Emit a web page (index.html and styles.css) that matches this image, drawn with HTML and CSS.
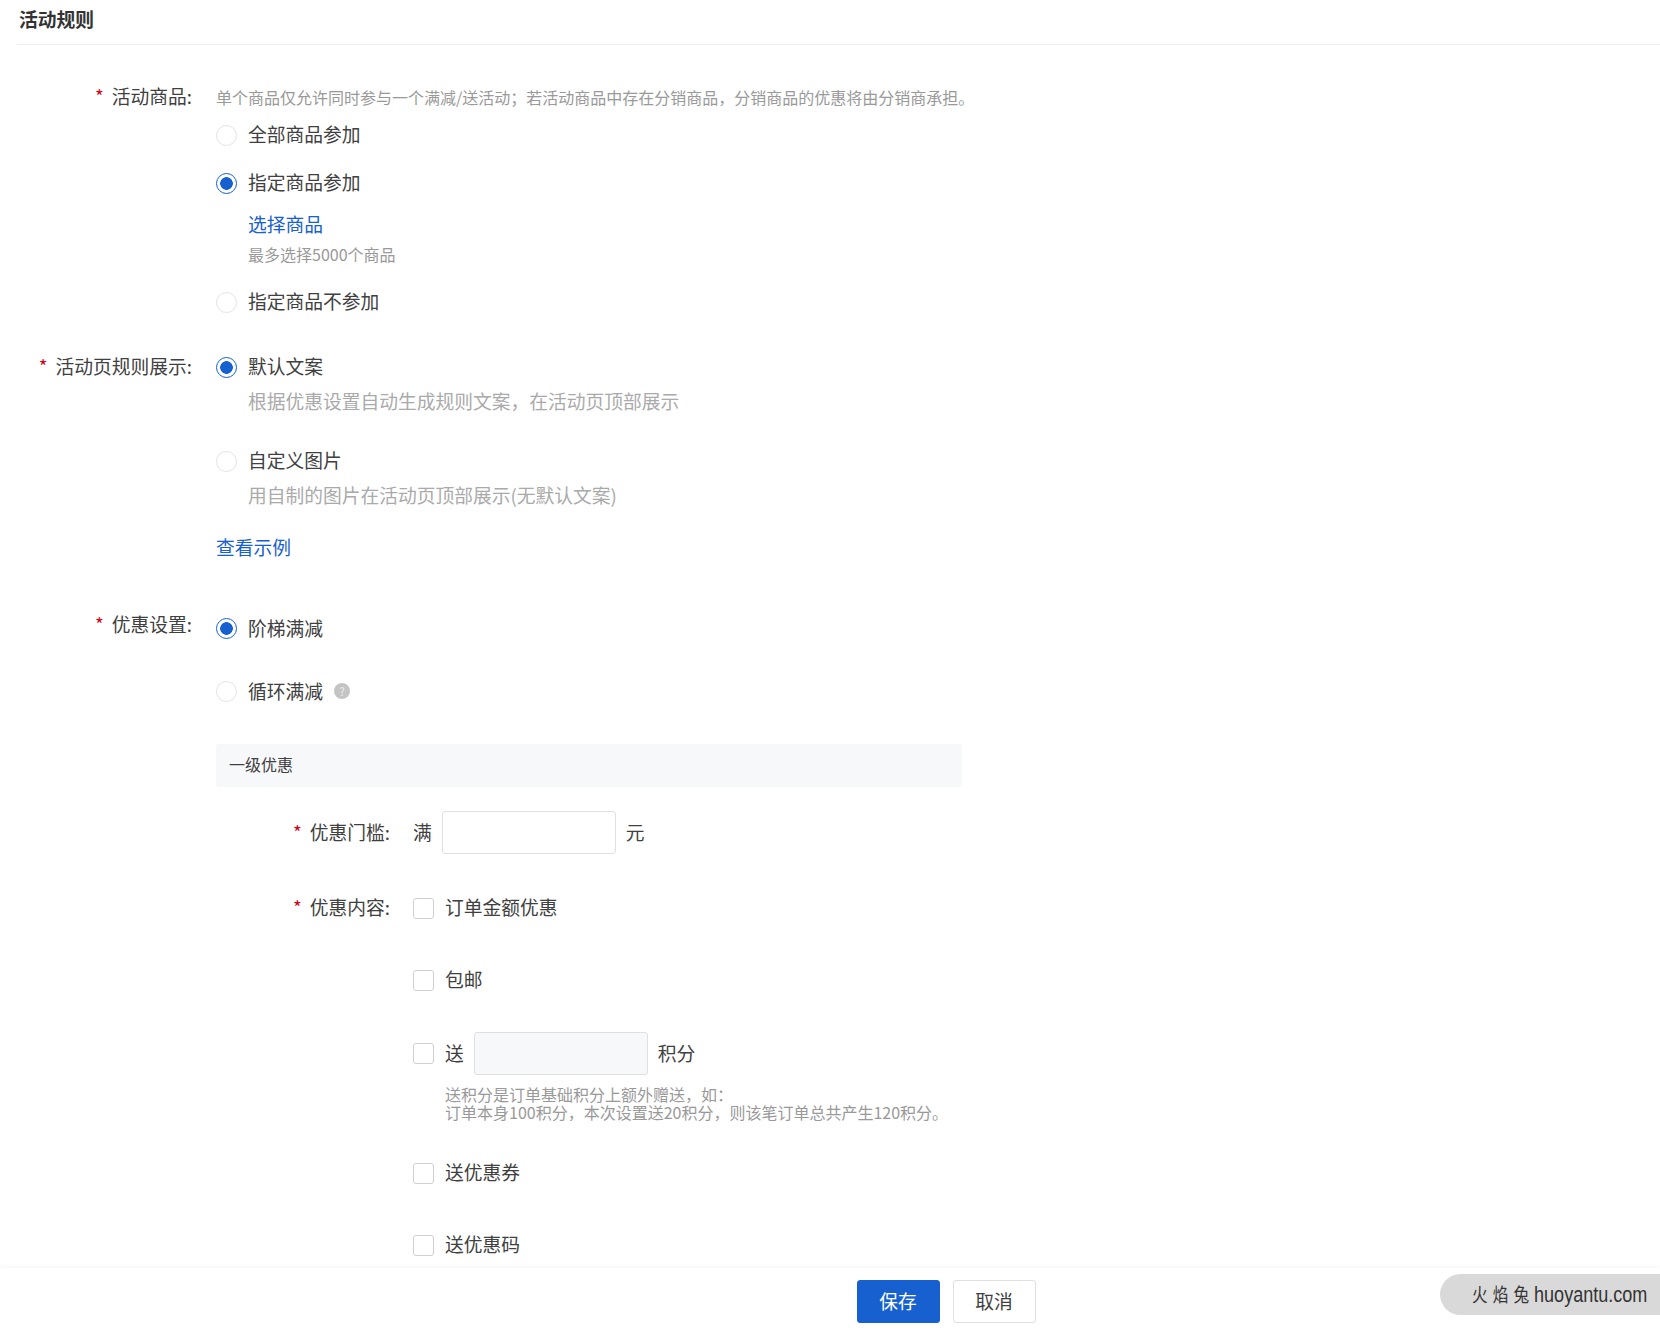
FILE: index.html
```html
<!DOCTYPE html>
<html lang="zh-CN">
<head>
	<meta charset="utf-8">
	<meta name="viewport" content="width=device-width, initial-scale=1">
	<title>活动规则</title>

	<link rel="stylesheet" href="styles.css">
</head>
<body>

	<div class="page">
		<form class="main">
			<h2 class="title">活动规则</h2>

			<div class="form-group first-group">
				<div class="label label-first"><i>*</i>活动商品:</div>
				<div class="control">
					<p class="hint line">单个商品仅允许同时参与一个满减/送活动&#65307;若活动商品中存在分销商品&#65292;分销商品的优惠将由分销商承担。</p>
					<label class="choice mt13"><input type="radio" name="goods">全部商品参加</label>
					<label class="choice mt24"><input type="radio" name="goods" checked>指定商品参加</label>
					<div class="indent">
						<a class="link line mt17">选择商品</a>
						<p class="hint line mt7">最多选择5000个商品</p>
					</div>
					<label class="choice mt23"><input type="radio" name="goods">指定商品不参加</label>
				</div>
			</div>

			<div class="form-group mt41">
				<div class="label"><i>*</i>活动页规则展示:</div>
				<div class="control">
					<label class="choice"><input type="radio" name="rule" checked>默认文案</label>
					<p class="desc line indent mt10">根据优惠设置自动生成规则文案&#65292;在活动页顶部展示</p>
					<label class="choice mt36"><input type="radio" name="rule">自定义图片</label>
					<p class="desc line indent mt10">用自制的图片在活动页顶部展示(无默认文案)</p>
					<a class="link line mt28">查看示例</a>
				</div>
			</div>

			<div class="form-group mt57">
				<div class="label label-up"><i>*</i>优惠设置:</div>
				<div class="control">
					<label class="choice choice-low"><input type="radio" name="type" checked>阶梯满减</label>
					<label class="choice choice-low mt39"><input type="radio" name="type">循环满减<span class="help">?</span></label>

					<div class="level-head">一级优惠</div>

					<div class="sub-group threshold">
						<div class="label sub-label"><i>*</i>优惠门槛:</div>
						<div class="inline">
							<span>满</span>
							<input type="text" class="num">
							<span>元</span>
						</div>
					</div>

					<div class="sub-group mt42">
						<div class="label sub-label"><i>*</i>优惠内容:</div>
						<div class="control">
							<label class="choice"><input type="checkbox">订单金额优惠</label>
							<label class="choice mt48"><input type="checkbox">包邮</label>
							<div class="inline mt40">
								<label class="choice"><input type="checkbox">送</label>
								<input type="text" class="num" disabled>
								<span>积分</span>
							</div>
							<p class="hint points">送积分是订单基础积分上额外赠送&#65292;如&#65306;<br>订单本身100积分&#65292;本次设置送20积分&#65292;则该笔订单总共产生120积分。</p>
							<label class="choice mt40"><input type="checkbox">送优惠券</label>
							<label class="choice mt48"><input type="checkbox">送优惠码</label>
						</div>
					</div>
				</div>
			</div>
		</form>

		<div class="footer">
			<button type="submit" class="btn btn-primary">保存</button>
			<button type="reset" class="btn">取消</button>
		</div>

		<div class="watermark"><span class="wm-text"><span class="wm-cn">火 焰 兔</span> huoyantu.com</span></div>
	</div>

</body>
</html>
```

FILE: styles.css
```css
*{
	margin: 0;
	padding: 0;
	box-sizing: border-box;
}
body{
	background: #fff;
	color: #404040;
	font-family: "Noto Sans CJK SC", "Liberation Sans", sans-serif;
	font-size: 18.75px;
}
.page{
	position: relative;
	display: flex;
	flex-direction: column;
	height: 1330px;
	overflow: hidden;
}
.main{
	flex: 1;
	overflow: hidden;
}
.title{
	height: 45px;
	margin-left: 17px;
	padding-left: 2px;
	border-bottom: 1px solid #eceef0;
	font-size: 18.75px;
	font-weight: 700;
	line-height: 38px;
	color: #333;
}
.form-group{
	display: flex;
}
.first-group{
	margin-top: 41px;
}
.label{
	flex: none;
	width: 192px;
	margin-right: 24px;
	height: 24px;
	line-height: 22px;
	text-align: right;
	white-space: nowrap;
}
.label-first{
	margin-top: -1px;
}
.label-up{
	margin-top: -3px;
}
.label i{
	font-style: normal;
	color: #d0021b;
	margin-right: 8px;
}
.control{
	flex: 1;
	min-width: 0;
}
.line{
	display: block;
	height: 24px;
	line-height: 24px;
}
.choice{
	display: flex;
	align-items: center;
	height: 24px;
	padding-bottom: 2px;
	line-height: 22px;
}
.choice input{
	appearance: none;
	flex: none;
	width: 21px;
	height: 21px;
	margin-top: 2px;
	margin-right: 11px;
	background: #fff;
	border: 1px solid #e3e3e3;
	border-radius: 50%;
}
.choice-low{
	padding-bottom: 0;
}
.choice-low input{
	margin-top: 0;
}
.choice input:checked{
	border-color: #1660cf;
	background: radial-gradient(circle, #1660cf 0, #1660cf 6px, #fff 6.6px);
}
.choice input[type=checkbox]{
	border: 1px solid #d0d0d0;
	border-radius: 3px;
}
.indent{
	margin-left: 32px;
}
.hint{
	font-size: 16px;
	color: #999;
}
.hint.line{
	line-height: 22px;
}
.desc{
	color: #aaa;
}
.link{
	color: #1660cf;
}
.help{
	width: 16px;
	height: 16px;
	margin-left: 11px;
	border-radius: 50%;
	background: #c4c4c4;
	color: #eee;
	font-size: 11px;
	line-height: 16px;
	text-align: center;
}
.level-head{
	width: 746px;
	height: 43px;
	margin-top: 41px;
	padding-left: 13px;
	background: #f7f8fa;
	border-radius: 3px;
	font-size: 16px;
	line-height: 41px;
}
.sub-group{
	display: flex;
}
.threshold{
	margin-top: 24px;
	align-items: center;
}
.sub-label{
	width: 174px;
	margin-right: 23px;
}
.inline{
	display: flex;
	align-items: center;
	gap: 10px;
}
.inline span{
	padding-bottom: 2px;
}
.num{
	width: 174px;
	height: 43px;
	background: #fff;
	border: 1px solid #e0e0e0;
	border-radius: 3px;
	outline: none;
}
.num:disabled{
	background: #f7f8fa;
}
.points{
	margin-top: 10px;
	margin-left: 32px;
	line-height: 18px;
}
.footer{
	flex: none;
	display: flex;
	justify-content: center;
	gap: 13px;
	height: 62px;
	padding-top: 12px;
	padding-left: 232px;
	background: #fff;
	box-shadow: 0 -2px 4px rgba(0,0,0,.03);
}
.btn{
	width: 83px;
	height: 43px;
	padding-bottom: 3px;
	background: #fff;
	color: #404040;
	border: 1px solid #e0e0e0;
	border-radius: 3px;
	font-family: inherit;
	font-size: 18.75px;
}
.btn-primary{
	background: #1660cf;
	border-color: #1660cf;
	color: #fff;
}
.watermark{
	position: absolute;
	right: 0;
	bottom: 15px;
	width: 220px;
	height: 41px;
	padding-left: 32px;
	background: #d9d9d9;
	border-radius: 21px 0 0 21px;
	font-family: "Liberation Sans", "Noto Sans CJK SC", sans-serif;
	font-size: 22px;
	line-height: 41px;
	color: #333;
	white-space: nowrap;
}
.wm-text{
	display: inline-block;
	transform: scaleX(.82);
	transform-origin: left center;
}
.wm-cn{
	font-size: 19px;
	word-spacing: 1px;
}
.mt7{margin-top: 7px;}
.mt10{margin-top: 10px;}
.mt13{margin-top: 13px;}
.mt17{margin-top: 17px;}
.mt23{margin-top: 23px;}
.mt24{margin-top: 24px;}
.mt28{margin-top: 28px;}
.mt36{margin-top: 36px;}
.mt39{margin-top: 39px;}
.mt40{margin-top: 40px;}
.mt41{margin-top: 41px;}
.mt42{margin-top: 42px;}
.mt48{margin-top: 48px;}
.mt57{margin-top: 57px;}
```
